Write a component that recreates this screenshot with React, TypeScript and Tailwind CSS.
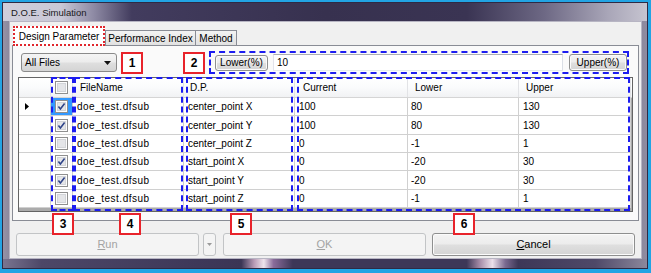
import React from "react";

const rows = [
  { on: true, dp: "center_point X", cur: "100", lo: "80", up: "130" },
  { on: true, dp: "center_point Y", cur: "100", lo: "80", up: "130" },
  { on: false, dp: "center_point Z", cur: "0", lo: "-1", up: "1" },
  { on: true, dp: "start_point X", cur: "0", lo: "-20", up: "30" },
  { on: true, dp: "start_point Y", cur: "0", lo: "-20", up: "30" },
  { on: false, dp: "start_point Z", cur: "0", lo: "-1", up: "1" },
];

const btnOn =
  "rounded-[3px] border border-[#8e8f8f] bg-[linear-gradient(180deg,#f4f4f4_0%,#ececec_48%,#dfdfdf_52%,#d4d4d4_100%)] shadow-[inset_0_0_0_1px_#fbfbfb] flex items-center justify-center text-black";
const btnOff =
  "rounded-[3px] border border-[#c2c4c6] bg-[#f4f4f4] flex items-center justify-center text-[#a3a3a3]";

function Check({ on }: { on: boolean }) {
  return (
    <svg width="13" height="13" viewBox="0 0 13 13">
      <rect x="0.5" y="0.5" width="12" height="12" fill="#fdfdfd" stroke="#8f8f8f" />
      <rect x="2.5" y="2.5" width="8" height="8" fill="#e4e5e8" stroke="#d2d4d8" />
      {on && <path d="M3.4 6.6 L5.4 9 L9.6 3.6" fill="none" stroke="#2f4489" strokeWidth="1.6" />}
    </svg>
  );
}

function Tag({ n, pos }: { n: string; pos: string }) {
  return (
    <div
      className={`absolute z-20 w-[22px] h-[22px] border-2 border-[#e8232b] bg-white flex items-center justify-center text-[12px] font-bold text-black ${pos}`}
    >
      {n}
    </div>
  );
}

export default function App() {
  return (
    <div className="w-[651px] h-[273px] bg-[#22a4e4] pt-[2px] pl-[2px] pr-[3px] pb-[4px] font-['Liberation_Sans',Arial,sans-serif] text-[10px] text-black">
      <div className="h-full flex flex-col border border-[#2e2a44] bg-[linear-gradient(90deg,#9593a6_0%,#6a6582_4%,#433d5f_20%,#3c3658_60%,#5c5774_88%,#8f8ca0_100%)]">
        {/* Title bar */}
        <div className="h-[18px] shrink-0 flex items-center pt-[3px] pl-[8px] bg-[linear-gradient(90deg,#cfcedb_0%,#c9c8d6_9%,#8f8ba5_14%,#423c5e_20%,#37314f_50%,#3a3453_72%,#6d6884_84%,#a9a6b8_94%,#c6c4d0_100%)]">
          <span className="text-[9.5px] text-[#1a1a1a]">D.O.E. Simulation</span>
        </div>

        {/* Client row */}
        <div className="flex h-[238px]">
          <div className="w-[6px] shrink-0" />
          <div className="w-[633px] h-full border border-[#b7b5c3] bg-[#f0f0f0] flex flex-col">
            {/* Tab control */}
            <div className="px-[2px] pt-[5px]">
              <div className="h-[18px] flex items-end pl-[1px]">
                <div className="relative z-10 -mb-[1px] h-[20px] w-[92px] bg-white border-2 border-dotted border-[#e0262c] flex items-center justify-center">
                  Design Parameter
                </div>
                <div className="h-[15px] w-[91px] border border-b-0 border-[#898c95] bg-[linear-gradient(180deg,#f3f3f3,#e1e1e1)] flex items-center justify-center">
                  Performance Index
                </div>
                <div className="-ml-[1px] h-[15px] w-[42px] border border-b-0 border-[#898c95] bg-[linear-gradient(180deg,#f3f3f3,#e1e1e1)] flex items-center justify-center">
                  Method
                </div>
              </div>

              <div className="relative h-[176px] border border-[#898c95] bg-[#fafafa]">
                {/* Filter row */}
                <div className="mt-[5px] h-[23px] flex items-center pl-[8px]">
                  <div className="w-[96px] h-[19px] rounded-[3px] border border-[#8a8a8a] bg-[linear-gradient(180deg,#f4f4f4_0%,#ececec_48%,#dfdfdf_52%,#d4d4d4_100%)] flex items-center justify-between pl-[3px] pr-[5px]">
                    <span>All Files</span>
                    <svg width="7" height="4" viewBox="0 0 7 4">
                      <path d="M0 0H7L3.5 4Z" fill="#111" />
                    </svg>
                  </div>
                  <div className="ml-[4px] w-[22px] h-[22px] border-2 border-[#e8232b] bg-white flex items-center justify-center text-[12px] font-bold">
                    1
                  </div>
                  <div className="ml-[40px] w-[22px] h-[22px] border-2 border-[#e8232b] bg-white flex items-center justify-center text-[12px] font-bold">
                    2
                  </div>
                  <div className="ml-[4px] w-[420px] h-[23px] border-2 border-dashed border-[#1c1cf0] flex items-center pl-[4px]">
                    <div className={`${btnOn} w-[53px] h-[16px]`}>Lower(%)</div>
                    <div className="ml-[5px] w-[290px] h-[17px] border border-[#abadb3] border-l-[#e2e3ea] border-r-[#dbdfe6] border-b-[#e3e9ef] bg-white flex items-center pl-[3px]">
                      10
                    </div>
                    <div className={`${btnOn} ml-[6px] w-[58px] h-[17px]`}>Upper(%)</div>
                  </div>
                </div>

                {/* Grid */}
                <div className="mt-[3px] ml-[5px] w-[615px] h-[135px] border border-[#646464] bg-[#ababab]">
                  <div className="flex h-[20px] border-b border-[#d5d5d5] bg-[linear-gradient(180deg,#ffffff_0%,#fafbfc_50%,#f1f2f4_100%)]">
                    <div className="w-[32px] border-r border-[#e2e3e6]" />
                    <div className="w-[22px] border-r border-[#e2e3e6] flex items-center justify-center">
                      <Check on={false} />
                    </div>
                    <div className="w-[111px] border-r border-[#e2e3e6] flex items-center pl-[7px]">FileName</div>
                    <div className="w-[111px] border-r border-[#e2e3e6] flex items-center pl-[6px]">D.P.</div>
                    <div className="w-[113px] border-r border-[#e2e3e6] flex items-center pl-[8px]">Current</div>
                    <div className="w-[111px] border-r border-[#e2e3e6] flex items-center pl-[7px]">Lower</div>
                    <div className="w-[112px] border-r border-[#e2e3e6] flex items-center pl-[7px]">Upper</div>
                  </div>
                  {rows.map((r, i) => (
                    <div
                      key={i}
                      className={`flex w-[612px] bg-white border-b border-[#d0d0d0] ${
                        i % 3 === 1 ? "h-[19px]" : "h-[18px]"
                      }`}
                    >
                      <div className="w-[32px] border-r border-[#d0d0d0] flex items-center pl-[6px]">
                        {i === 0 && (
                          <svg width="4" height="7" viewBox="0 0 4 7">
                            <path d="M0 0L4 3.5L0 7Z" fill="#000" />
                          </svg>
                        )}
                      </div>
                      <div
                        className={`w-[22px] border-r border-[#d0d0d0] flex items-center justify-center ${
                          i === 0 ? "bg-[#3399ff]" : ""
                        }`}
                      >
                        <Check on={r.on} />
                      </div>
                      <div className="w-[111px] border-r border-[#d0d0d0] flex items-center pl-[4px] tracking-[0.5px]">
                        doe_test.dfsub
                      </div>
                      <div className="w-[111px] border-r border-[#d0d0d0] flex items-center pl-[4px]">{r.dp}</div>
                      <div className="w-[113px] border-r border-[#d0d0d0] flex items-center pl-[4px]">{r.cur}</div>
                      <div className="w-[111px] border-r border-[#d0d0d0] flex items-center pl-[3px]">{r.lo}</div>
                      <div className="w-[112px] border-r border-[#d0d0d0] flex items-center pl-[4px]">{r.up}</div>
                    </div>
                  ))}
                </div>

                {/* Annotation overlays */}
                <div className="absolute left-[38px] top-[31px] w-[23px] h-[134px] border-2 border-dashed border-[#1c1cf0]" />
                <div className="absolute left-[61px] top-[31px] w-[109px] h-[134px] border-2 border-dashed border-[#1c1cf0]" />
                <div className="absolute left-[173px] top-[31px] w-[107px] h-[134px] border-2 border-dashed border-[#1c1cf0]" />
                <div className="absolute left-[284px] top-[31px] w-[333px] h-[134px] border-2 border-dashed border-[#1c1cf0]" />
                <Tag n="3" pos="left-[39px] top-[167px]" />
                <Tag n="4" pos="left-[106px] top-[167px]" />
                <Tag n="5" pos="left-[217px] top-[167px]" />
                <Tag n="6" pos="left-[440px] top-[167px]" />
              </div>
            </div>

            {/* Buttons */}
            <div className="mt-[12px] h-[23px] flex pl-[6px]">
              <div className={`${btnOff} w-[183px] h-[23px] text-[11px]`}>
                <span><span className="underline">R</span>un</span>
              </div>
              <div className={`${btnOff} ml-[4px] w-[13px] h-[23px]`}>
                <svg width="5" height="3" viewBox="0 0 5 3">
                  <path d="M0 0H5L2.5 3Z" fill="#9a9a9a" />
                </svg>
              </div>
              <div className={`${btnOff} ml-[7px] w-[203px] h-[23px] text-[11px]`}>
                <span><span className="underline">O</span>K</span>
              </div>
              <div className={`${btnOn} ml-[6px] w-[203px] h-[23px] text-[11px]`}>
                <span><span className="underline">C</span>ancel</span>
              </div>
            </div>
          </div>
          <div className="w-[5px] shrink-0" />
        </div>

        {/* Bottom frame */}
        <div className="flex-1 bg-[linear-gradient(90deg,#7a7590_0%,#4d4767_6%,#3e3859_30%,#3b3555_37%,#b89bb6_39%,#efe4ec_40.5%,#8a6c9a_42%,#3d3757_45%,#3d3757_72%,#a48aa6_74%,#ece0ea_76%,#7b6a90_78%,#3d3757_80%,#4f4968_92%,#8c889c_100%)]" />
      </div>
    </div>
  );
}
